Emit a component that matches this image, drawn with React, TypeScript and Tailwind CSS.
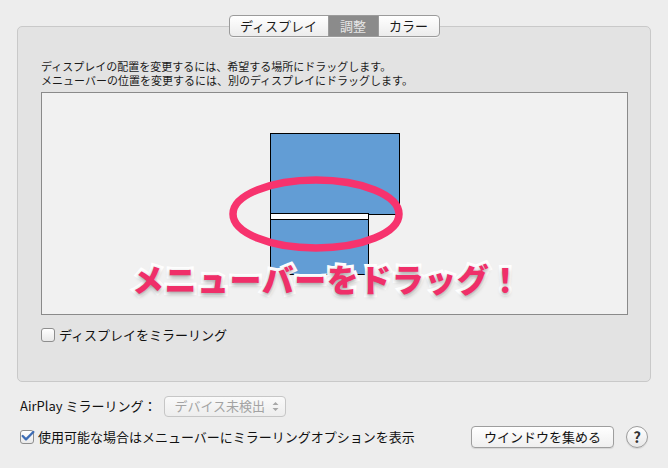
import { Check } from 'lucide-react';

const FONT = '"Noto Sans CJK JP", "Noto Sans", sans-serif';

const Checkbox = ({ checked = false }: { checked?: boolean }) => (
  <div className="relative w-[14px] h-[14px] rounded-[3px] border border-[#8e8e8e] bg-gradient-to-b from-white to-[#e9e9e9] shrink-0">
    {checked && (
      <Check className="absolute -left-[1px] -top-[3px] w-[16px] h-[16px] text-[#3e6db5]" strokeWidth={3.5} />
    )}
  </div>
);

const Tabs = () => (
  <div className="flex justify-center relative z-10">
    <div className="flex h-[22px] rounded-[4px] border border-[#9b9b9b] bg-gradient-to-b from-white to-[#ececec] text-[13px] text-[#1a1a1a] overflow-hidden shadow-[0_1px_0_rgba(255,255,255,0.6)]">
      <div className="w-[99px] flex items-center justify-center border-r border-[#9b9b9b]">ディスプレイ</div>
      <div className="w-[49px] flex items-center justify-center bg-[#8b8b8b] text-[#e6e6e6]">調整</div>
      <div className="w-[61px] flex items-center justify-center border-l border-[#9b9b9b]">カラー</div>
    </div>
  </div>
);

const Arrangement = () => (
  <div className="relative w-[587px] h-[223px] border border-[#8a8a8a] bg-[#f1f1f1] mt-[5px]">
    {/* main display */}
    <div className="absolute left-[228px] top-[40px] w-[130px] h-[82px] bg-[#629dd5] border border-black" />
    {/* secondary display with menu bar */}
    <div className="absolute left-[228px] top-[120px] w-[99px] h-[62px] bg-[#629dd5] border border-black">
      <div className="h-[6px] bg-white border-b border-black" />
    </div>
    <svg className="absolute left-0 top-0" width="587" height="223">
      <ellipse cx="274" cy="121" rx="83" ry="34" fill="none" stroke="#f7336e" strokeWidth="7.5" />
    </svg>
    <div
      className="absolute left-[90px] top-[169px] w-[385px] text-center text-[32px] tracking-[0.5px] font-black leading-none text-[#ef2f69] whitespace-nowrap [paint-order:stroke_fill] [-webkit-text-stroke:6px_white] [text-shadow:0_2px_4px_rgba(0,0,0,0.4)]"
    >
      メニューバーをドラッグ！
    </div>
  </div>
);

export default function App() {
  return (
    <div
      className="w-[668px] h-[468px] bg-[#ededed] overflow-hidden pt-[15px] text-[#111]"
      style={{ fontFamily: FONT }}
    >
      <Tabs />
      <div className="-mt-[11px] mx-[17px] h-[356px] rounded-[5px] border border-[#c9c9c9] bg-[#e3e3e3] pt-[32px] px-[23px]">
        <div className="text-[11px] leading-[14px] text-[#1a1a1a]">
          <div>ディスプレイの配置を変更するには、希望する場所にドラッグします。</div>
          <div>メニューバーの位置を変更するには、別のディスプレイにドラッグします。</div>
        </div>
        <Arrangement />
        <div className="flex items-center gap-[4px] mt-[10px] text-[13px]">
          <Checkbox />
          <span>ディスプレイをミラーリング</span>
        </div>
      </div>
      <div className="flex items-center px-[20px] mt-[13px] h-[22px] text-[13px]">
        <span>AirPlay ミラーリング：</span>
        <div className="ml-[8px] w-[122px] h-[21px] rounded-[4px] border border-[#c6c6c6] bg-gradient-to-b from-[#fafafa] to-[#ededed] flex items-center pl-[9px] pr-[6px] text-[#a3a3a3]">
          <span className="flex-1">デバイス未検出</span>
          <svg width="7" height="11" viewBox="0 0 7 11">
            <path d="M0.5 4 L3.5 1 L6.5 4 Z M0.5 7 L3.5 10 L6.5 7 Z" fill="#a8a8a8" />
          </svg>
        </div>
      </div>
      <div className="flex items-center px-[20px] mt-[9px] h-[22px] text-[13px]">
        <Checkbox checked />
        <span className="ml-[4px]">使用可能な場合はメニューバーにミラーリングオプションを表示</span>
        <div className="ml-auto w-[143px] h-[22px] rounded-[4px] border border-[#9e9e9e] bg-gradient-to-b from-white to-[#efefef] flex items-center justify-center shadow-[0_1px_1px_rgba(0,0,0,0.1)]">
          ウインドウを集める
        </div>
        <div className="ml-[12px] w-[22px] h-[22px] rounded-full border border-[#9c9c9c] bg-gradient-to-b from-white to-[#e8e8e8] flex items-center justify-center text-[15px] font-bold text-[#333] shadow-[0_1px_1px_rgba(0,0,0,0.1)]">
          ?
        </div>
      </div>
    </div>
  );
}
